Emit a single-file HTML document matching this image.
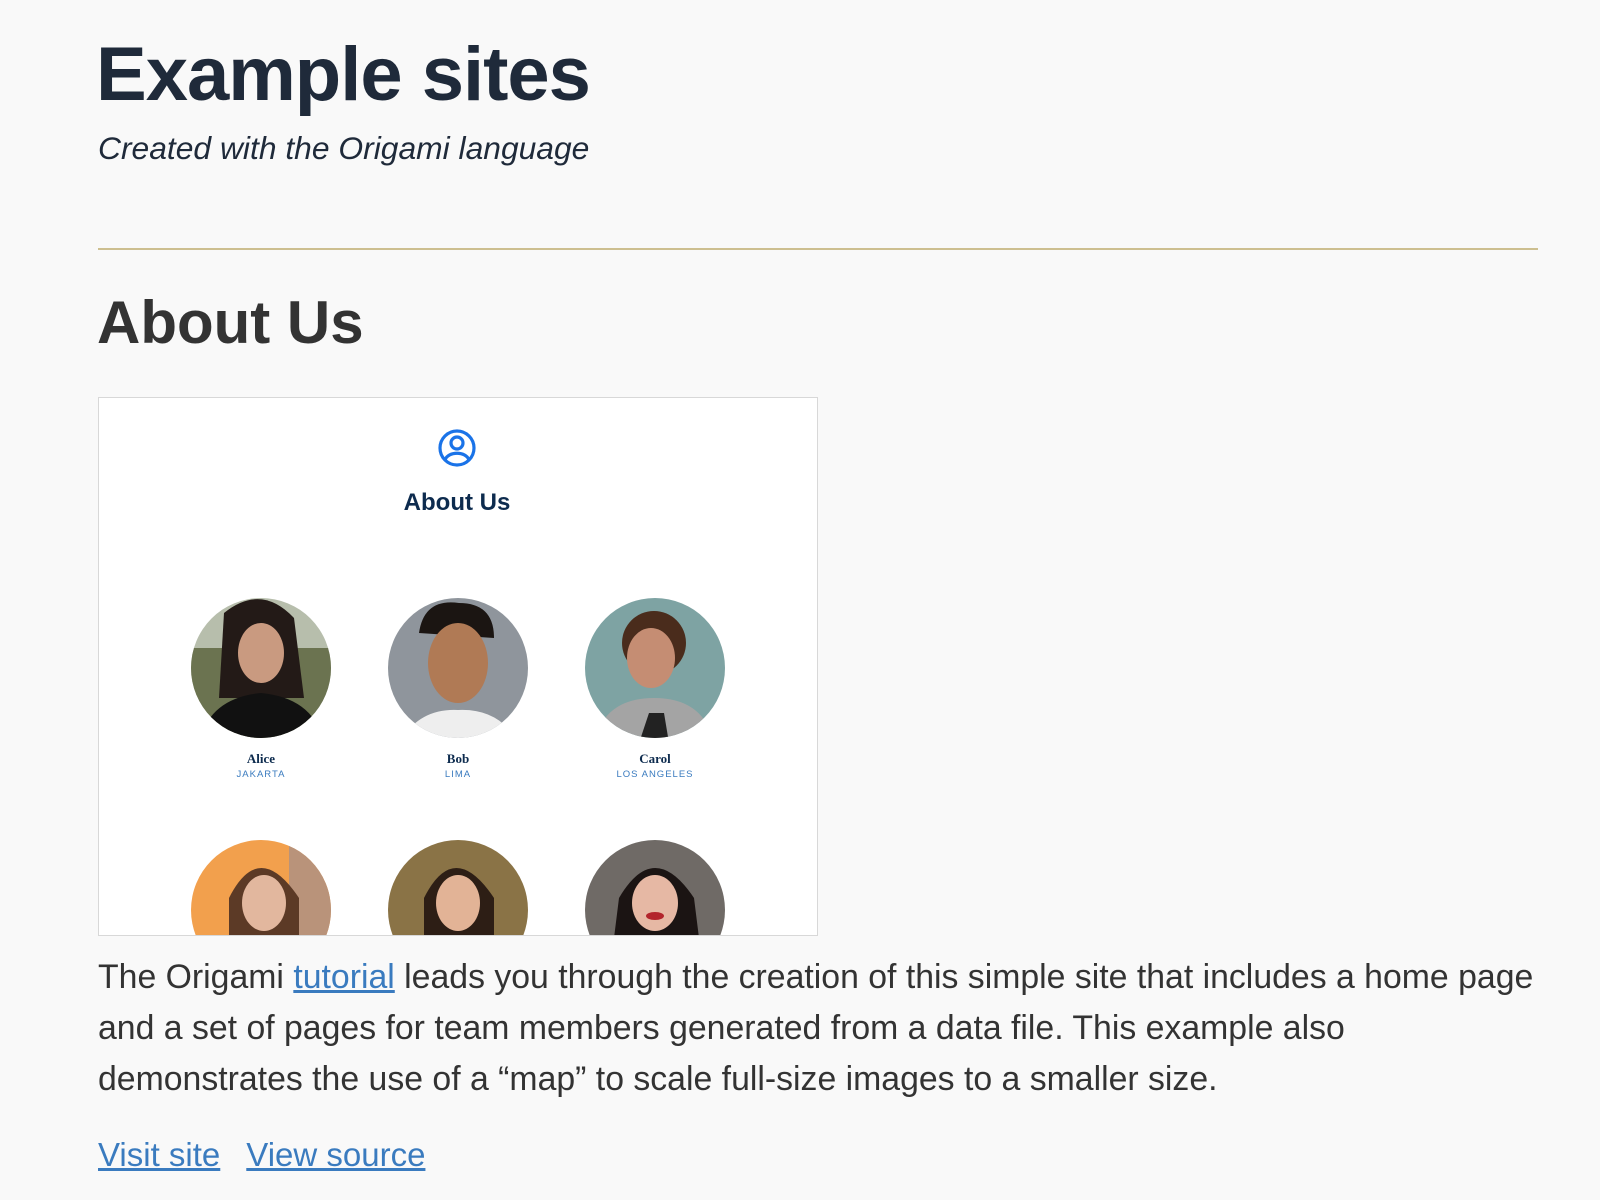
<!DOCTYPE html>
<html><head><meta charset="utf-8"><style>
html,body{margin:0;background:#f9f9f9;}
body{width:1600px;height:1200px;overflow:hidden;position:relative;font-family:"Liberation Sans",sans-serif;}
.t{position:absolute;white-space:nowrap;}
h1{position:absolute;left:96px;top:30px;margin:0;font-size:76px;font-weight:bold;color:#1f2a3a;letter-spacing:-1px;line-height:90px;}
.sub{left:98px;top:130px;font-size:31.8px;font-style:italic;color:#1f2a3a;}
.hr{position:absolute;left:98px;top:248px;width:1440px;height:2px;background:#cdbf90;}
h2{position:absolute;left:97px;top:288px;margin:0;font-size:60px;font-weight:bold;color:#333;line-height:70px;}
.box{position:absolute;left:98px;top:397px;width:718px;height:537px;background:#fff;border:1px solid #d8d8d8;overflow:hidden;}
.p{position:absolute;left:98px;top:952px;width:1480px;font-size:33.8px;line-height:51px;color:#333;white-space:nowrap;}
a{color:#3a7bbf;}
.links{left:98px;top:1136px;font-size:33px;}
.nm{position:absolute;width:200px;text-align:center;font-family:"Liberation Serif",serif;font-weight:bold;font-size:13px;color:#0d2b4e;}
.ct{position:absolute;width:200px;text-align:center;font-size:9.5px;letter-spacing:1px;color:#3a7bbf;}
</style></head><body>
<h1>Example sites</h1>
<div class="t sub">Created with the Origami language</div>
<div class="hr"></div>
<h2>About Us</h2>
<div class="box">
<svg width="718" height="537" style="position:absolute;left:0;top:0">
<defs>
<clipPath id="c1"><circle cx="162" cy="270" r="70"/></clipPath>
<clipPath id="c2"><circle cx="359" cy="270" r="70"/></clipPath>
<clipPath id="c3"><circle cx="556" cy="270" r="70"/></clipPath>
<clipPath id="c4"><circle cx="162" cy="512" r="70"/></clipPath>
<clipPath id="c5"><circle cx="359" cy="512" r="70"/></clipPath>
<clipPath id="c6"><circle cx="556" cy="512" r="70"/></clipPath>
</defs>
<g fill="none" stroke="#1a73e8" stroke-width="3.2">
<circle cx="358" cy="50" r="17"/><circle cx="358" cy="45" r="6"/><path d="M346 62 C349 53 367 53 370 62"/>
</g>
<text x="358" y="112" text-anchor="middle" font-family="Liberation Sans" font-weight="bold" font-size="24" fill="#0d2b4e">About Us</text>
<g clip-path="url(#c1)"><rect x="90" y="198" width="150" height="150" fill="#b7beac"/><rect x="90" y="250" width="150" height="100" fill="#6b7350"/><path d="M125 215 Q162 185 195 220 L205 300 L120 300Z" fill="#231a17"/><ellipse cx="162" cy="255" rx="23" ry="30" fill="#c99a80"/><path d="M100 345 Q110 300 162 295 Q215 300 225 345Z" fill="#111"/></g>
<g clip-path="url(#c2)"><rect x="288" y="198" width="150" height="150" fill="#8f959c"/><path d="M320 235 Q325 200 360 205 Q395 205 395 240Z" fill="#1b1512"/><ellipse cx="359" cy="265" rx="30" ry="40" fill="#b07a55"/><path d="M300 345 Q320 310 359 312 Q400 310 420 345Z" fill="#eee"/></g>
<g clip-path="url(#c3)"><rect x="485" y="198" width="150" height="150" fill="#7ea3a3"/><circle cx="555" cy="245" r="32" fill="#4a2c1c"/><ellipse cx="552" cy="260" rx="24" ry="30" fill="#c58d73"/><path d="M495 345 Q505 300 555 300 Q605 300 615 345Z" fill="#a4a4a4"/><path d="M540 345 L550 315 L565 315 L570 345Z" fill="#222"/></g>
<g clip-path="url(#c4)"><rect x="90" y="440" width="150" height="150" fill="#f2a04d"/><rect x="190" y="440" width="50" height="150" fill="#b9937a"/><path d="M130 500 Q160 440 200 500 L200 540 L130 540Z" fill="#5c3a26"/><ellipse cx="165" cy="505" rx="22" ry="28" fill="#e2b79e"/></g>
<g clip-path="url(#c5)"><rect x="288" y="440" width="150" height="150" fill="#8a7346"/><path d="M325 500 Q355 440 395 500 L395 540 L325 540Z" fill="#2d1e15"/><ellipse cx="359" cy="505" rx="22" ry="28" fill="#e2b396"/></g>
<g clip-path="url(#c6)"><rect x="485" y="440" width="150" height="150" fill="#6f6a66"/><path d="M520 500 Q555 440 595 500 L600 540 L515 540Z" fill="#1b1413"/><ellipse cx="556" cy="505" rx="23" ry="28" fill="#e6b8a4"/><ellipse cx="556" cy="518" rx="9" ry="4" fill="#b3242b"/></g>
</svg>
<div class="nm" style="left:62px;top:353px">Alice</div>
<div class="ct" style="left:62px;top:371px">JAKARTA</div>
<div class="nm" style="left:259px;top:353px">Bob</div>
<div class="ct" style="left:259px;top:371px">LIMA</div>
<div class="nm" style="left:456px;top:353px">Carol</div>
<div class="ct" style="left:456px;top:371px">LOS ANGELES</div>
</div>
<div class="p">The Origami <a href="#">tutorial</a> leads you through the creation of this simple site that includes a home page<br>and a set of pages for team members generated from a data file. This example also<br>demonstrates the use of a “map” to scale full-size images to a smaller size.</div>
<div class="t links"><a href="#">Visit site</a><span style="display:inline-block;width:26px"></span><a href="#">View source</a></div>
</body></html>
